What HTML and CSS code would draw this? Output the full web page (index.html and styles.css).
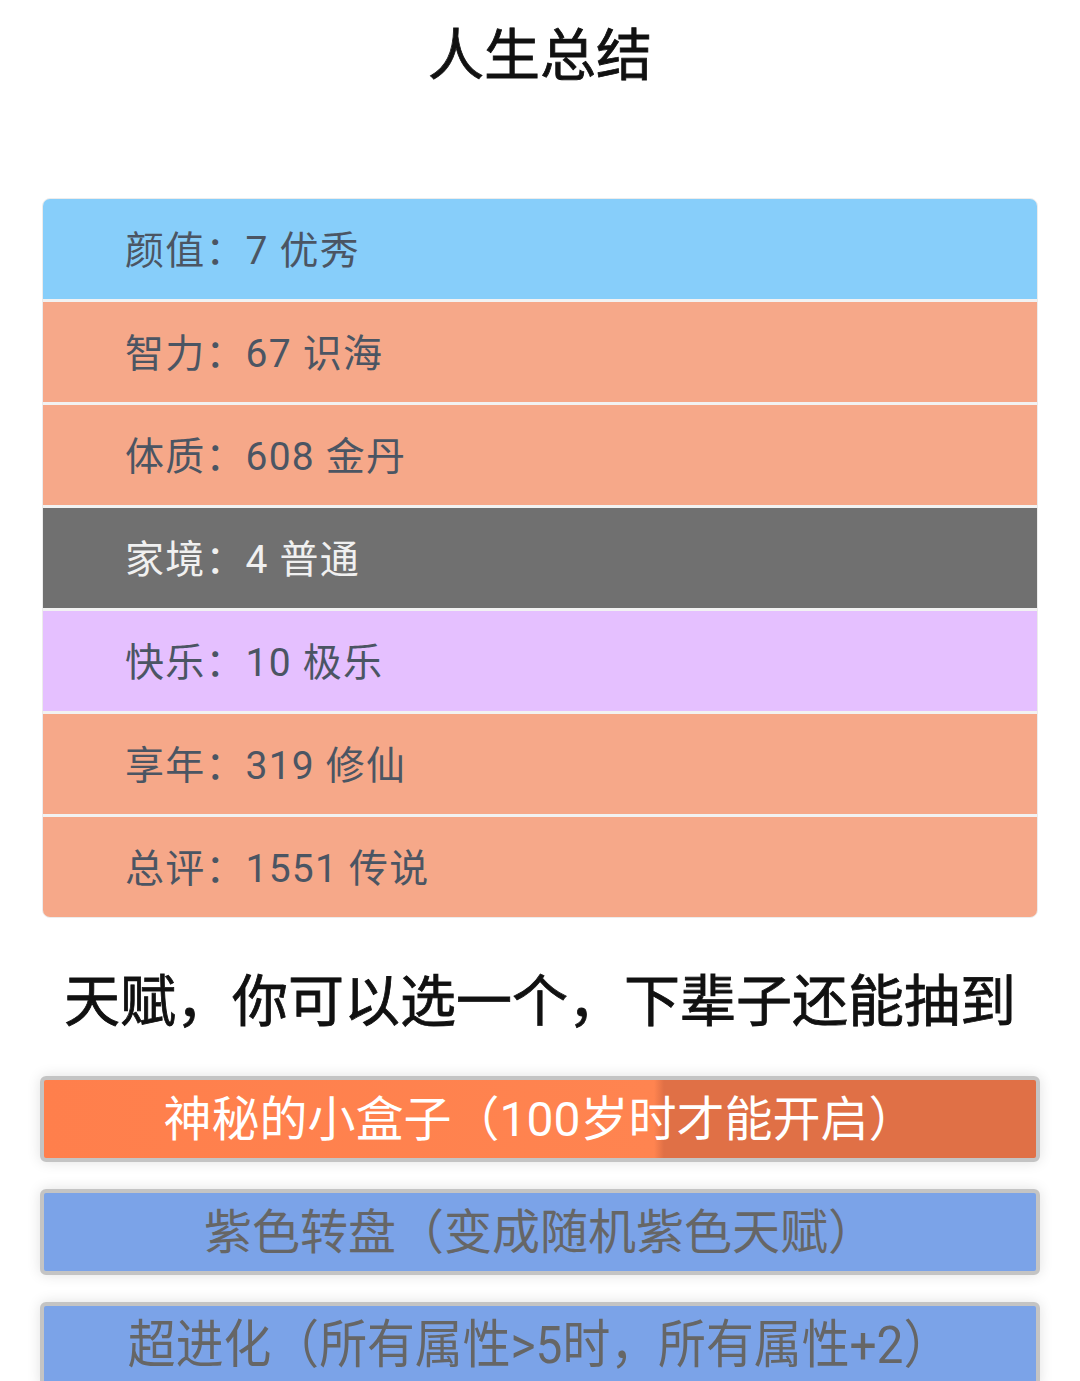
FILE: index.html
```html
<!DOCTYPE html>
<html lang="zh-CN">
<head>
    <meta charset="UTF-8">
    <meta name="viewport" content="width=device-width, initial-scale=1.0">
    <title>人生总结</title>
    <link rel="stylesheet" href="styles.css">
</head>
<body>
    <div class="page">
        <div class="title">人生总结</div>

        <div class="summary">
            <div class="row grade-blue">颜值：7 优秀</div>
            <div class="row grade-orange">智力：67 识海</div>
            <div class="row grade-orange">体质：608 金丹</div>
            <div class="row grade-gray">家境：4 普通</div>
            <div class="row grade-purple">快乐：10 极乐</div>
            <div class="row grade-orange">享年：319 修仙</div>
            <div class="row grade-orange">总评：1551 传说</div>
        </div>

        <div class="subtitle">天赋，你可以选一个，下辈子还能抽到</div>

        <ul class="talents">
            <li class="talent talent-orange selected"><span>神秘的小盒子（100岁时才能开启）</span></li>
            <li class="talent talent-blue"><span>紫色转盘（变成随机紫色天赋）</span></li>
            <li class="talent talent-blue"><span class="squeeze">超进化（所有属性&gt;5时，所有属性+2）</span></li>
        </ul>
    </div>
</body>
</html>
```

FILE: styles.css
```css
body {
    margin: 0;
    background: #ffffff;
    font-family: Roboto, "Noto Sans CJK SC", sans-serif;
    overflow: hidden;
}
.page {
    padding: 0 40px;
}
.title {
    text-align: center;
    font-size: 56px;
    line-height: 80px;
    color: #111;
    -webkit-text-stroke: 0.8px #111;
    padding-top: 16px;
    margin-bottom: 102px;
}
.summary {
    margin: 0 2px;
    display: flex;
    flex-direction: column;
    gap: 3px;
    background: #f2f2f2;
    border: 1px solid #ececec;
    border-radius: 8px;
    overflow: hidden;
}
.row {
    height: 96px;
    padding-top: 4px;
    line-height: 96px;
    padding-left: 82px;
    font-size: 39px;
    letter-spacing: 1.2px;
    color: #4b5563;
}
.grade-blue {
    background: #87cefa;
}
.grade-orange {
    background: #f6a889;
}
.grade-gray {
    background: #707070;
    color: #f0f0f0;
}
.grade-purple {
    background: #e5c0ff;
}
.subtitle {
    text-align: center;
    font-size: 56px;
    line-height: 80px;
    color: #111;
    -webkit-text-stroke: 0.8px #111;
    margin: 44px 0 34px;
}
.talents {
    list-style: none;
    margin: 0;
    padding: 0;
    display: flex;
    flex-direction: column;
    gap: 27px;
}
.talent {
    height: 78px;
    border: 4px solid #c4c4c4;
    border-radius: 6px;
    box-shadow: 0 0 14px rgba(0, 0, 0, 0.12);
    text-align: center;
    font-size: 48px;
    line-height: 80px;
    white-space: nowrap;
}
.talent-orange {
    background: #ff7f50;
    color: #fff;
}
.talent-orange.selected {
    background: linear-gradient(to right, #ff7f4c 0%, #ff8450 61.5%, #e07046 62.5%, #e07046 100%);
}
.talent-blue {
    background: #7ba3e8;
    color: #666;
}
.squeeze {
    display: inline-block;
    font-size: 52px;
    line-height: 80px;
    transform: scaleX(0.92);
}
```
